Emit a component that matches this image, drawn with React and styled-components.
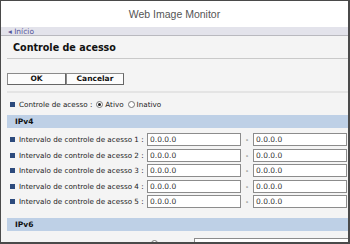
import React from 'react';
import styled, { createGlobalStyle } from 'styled-components';

const GlobalStyle = createGlobalStyle`
    html, body {
        margin: 0;
        padding: 0;
        background: #ffffff;
    }
    body {
        font-family: "Liberation Sans", Arial, sans-serif;
    }
`;

const Frame = styled.div`
    width: 350px;
    height: 244px;
    box-sizing: border-box;
    border-top: 1px solid #4a4a4a;
    border-left: 1px solid #4a4a4a;
    border-right: 2px solid #4a4a4a;
    border-bottom: 2px solid #4a4a4a;
    overflow: hidden;
    display: flex;
    flex-direction: column;
    background: #f4f4f4;
`;

const Header = styled.div`
    height: 26px;
    flex: none;
    background: #ffffff;
    display: flex;
    align-items: center;
    justify-content: center;
    color: #555;
    font-size: 10.5px;
`;

const Crumbs = styled.div`
    height: 8px;
    flex: none;
    background: #e3e3eb;
    border-bottom: 1px solid #b9b9bf;
    display: flex;
    align-items: center;
    padding-left: 7px;
    color: #56569a;
    font-size: 7.5px;
    font-family: "DejaVu Sans", sans-serif;
`;

const Content = styled.div`
    flex: 1;
    min-height: 0;
    padding-left: 6px;
    display: flex;
    flex-direction: column;
`;

const Title = styled.div`
    height: 22px;
    flex: none;
    border-bottom: 1px solid #c9c9c9;
    display: flex;
    align-items: center;
    padding-left: 6px;
    font-size: 9.6px;
    font-weight: bold;
    color: #111;
    font-family: "DejaVu Sans", sans-serif;
`;

const ButtonBar = styled.div`
    display: flex;
    flex: none;
    padding: 14px 0 6px 0;
    border-bottom: 2px solid #e4e4e4;
`;

const Button = styled.button`
    width: ${p => p.w}px;
    height: 12px;
    padding: 0;
    margin: 0;
    background: #fcfcfc;
    border: 1px solid #8a8a8a;
    border-right-color: #666;
    border-bottom-color: #666;
    font-family: "DejaVu Sans", sans-serif;
    font-size: 7.5px;
    font-weight: bold;
    color: #111;
    line-height: 10px;
`;

const Row = styled.div`
    display: flex;
    flex: none;
    align-items: center;
    height: ${p => p.h || 15.5}px;
    padding-left: 3px;
    font-family: "DejaVu Sans", sans-serif;
    font-size: 7.2px;
    color: #222;
    white-space: nowrap;
`;

const Bullet = styled.span`
    width: 5px;
    height: 5px;
    background: #2c4a7c;
    margin-right: 4px;
    flex: none;
`;

const Label = styled.span`
    width: ${p => p.w}px;
    flex: none;
`;

const Radio = styled.span`
    width: 7px;
    height: 7px;
    border-radius: 50%;
    border: 1px solid #777;
    background: #fff;
    box-sizing: border-box;
    margin: ${p => p.mt || 0}px 2px 0 4px;
    display: inline-flex;
    align-items: center;
    justify-content: center;
    flex: none;
    &::after {
        content: '';
        width: 3px;
        height: 3px;
        border-radius: 50%;
        background: ${p => (p.checked ? '#222' : 'transparent')};
    }
`;

const SectionBar = styled.div`
    height: 13px;
    flex: none;
    background: #bed0e6;
    display: flex;
    align-items: center;
    padding-left: 8px;
    font-family: "DejaVu Sans", sans-serif;
    font-size: 7.5px;
    font-weight: bold;
    color: #111;
    margin-top: ${p => p.mt || 0}px;
`;

const Field = styled.div`
    width: ${p => p.w || 94}px;
    height: 13px;
    box-sizing: border-box;
    border: 1px solid #8c8c8c;
    background: #fff;
    display: flex;
    align-items: center;
    padding-left: 2px;
    margin-left: ${p => p.ml || 0}px;
    font-size: 7.5px;
    color: #333;
    flex: none;
`;

const Dash = styled.span`
    width: 12px;
    text-align: center;
    flex: none;
`;

const Rows = styled.div`
    flex: none;
    padding-top: 4px;
`;

const CutRow = styled.div`
    flex: none;
    display: flex;
    align-items: flex-start;
    padding: 7px 0 0 140px;
`;

const ranges = [1, 2, 3, 4, 5];

export default function App() {
    return (
        <>
            <GlobalStyle />
            <Frame>
                <Header>Web Image Monitor</Header>
                <Crumbs>◂ Início</Crumbs>
                <Content>
                    <Title>Controle de acesso</Title>
                    <ButtonBar>
                        <Button w={59}>OK</Button>
                        <Button w={58}>Cancelar</Button>
                    </ButtonBar>
                    <Row h={22}>
                        <Bullet />
                        Controle de acesso :
                        <Radio checked />Ativo
                        <Radio />Inativo
                    </Row>
                    <SectionBar>IPv4</SectionBar>
                    <Rows>
                        {ranges.map(n => (
                            <Row key={n}>
                                <Bullet />
                                <Label w={128}>Intervalo de controle de acesso {n} :</Label>
                                <Field>0.0.0.0</Field>
                                <Dash>-</Dash>
                                <Field>0.0.0.0</Field>
                            </Row>
                        ))}
                    </Rows>
                    <SectionBar mt={8}>IPv6</SectionBar>
                    <CutRow>
                        <Radio mt={2} />
                        <Field w={160} ml={34} />
                    </CutRow>
                </Content>
            </Frame>
        </>
    );
}
